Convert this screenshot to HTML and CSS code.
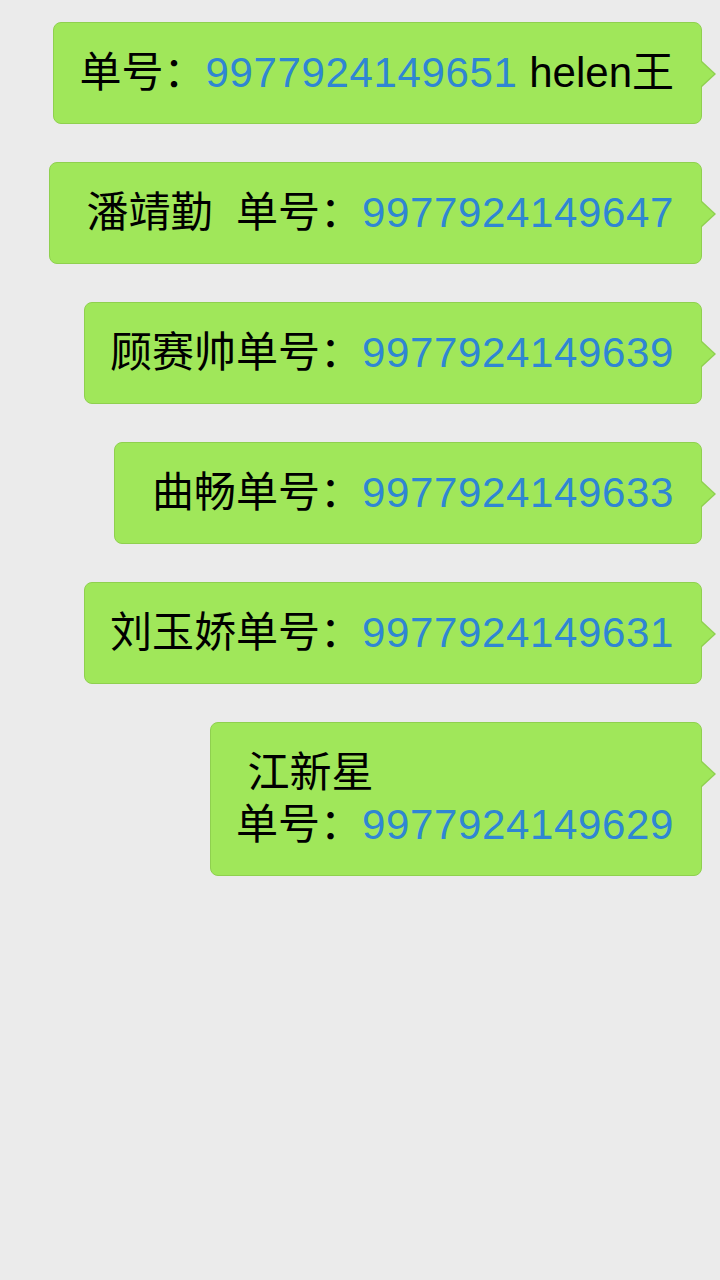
FILE: index.html
```html
<!DOCTYPE html>
<html lang="zh-CN">
<head>
    <meta charset="UTF-8">
    <meta name="viewport" content="width=device-width, initial-scale=1.0">
    <title>单号</title>
    <link rel="stylesheet" href="styles.css">
</head>
<body>
    <main class="chat">
        <div class="bubble">单号：<span class="num">9977924149651</span> helen王</div>
        <div class="bubble">&nbsp;潘靖勤 &nbsp;单号：<span class="num">9977924149647</span></div>
        <div class="bubble">顾赛帅单号：<span class="num">9977924149639</span></div>
        <div class="bubble">&nbsp;曲畅单号：<span class="num">9977924149633</span></div>
        <div class="bubble">刘玉娇单号：<span class="num">9977924149631</span></div>
        <div class="bubble">&nbsp;江新星<br>单号：<span class="num">9977924149629</span></div>
    </main>
</body>
</html>
```

FILE: styles.css
```css
body {
    margin: 0;
    padding: 0;
    background: #ebebeb;
    font-family: "Liberation Sans", "Noto Sans CJK SC", sans-serif;
    color: #000;
}
.chat {
    display: flex;
    flex-direction: column;
    align-items: flex-end;
    gap: 38px;
    padding: 22px 18px;
}
.bubble {
    position: relative;
    background: #a0e75a;
    border: 1px solid #8fd04f;
    border-radius: 8px;
    padding: 24px 27px 24px 25px;
    font-size: 42px;
    line-height: 52px;
    white-space: nowrap;
}
/* tail on the right side */
.bubble::before,
.bubble::after {
    content: "";
    position: absolute;
    top: 38px;
    width: 0;
    height: 0;
    border-style: solid;
    border-color: transparent;
}
.bubble::before {
    right: -15px;
    border-width: 13px 0 13px 14px;
    border-left-color: #8fd04f;
}
.bubble::after {
    right: -13px;
    border-width: 13px 0 13px 14px;
    border-left-color: #a0e75a;
}
.num {
    color: #2f86d3;
    letter-spacing: 0.65px;
}
```
